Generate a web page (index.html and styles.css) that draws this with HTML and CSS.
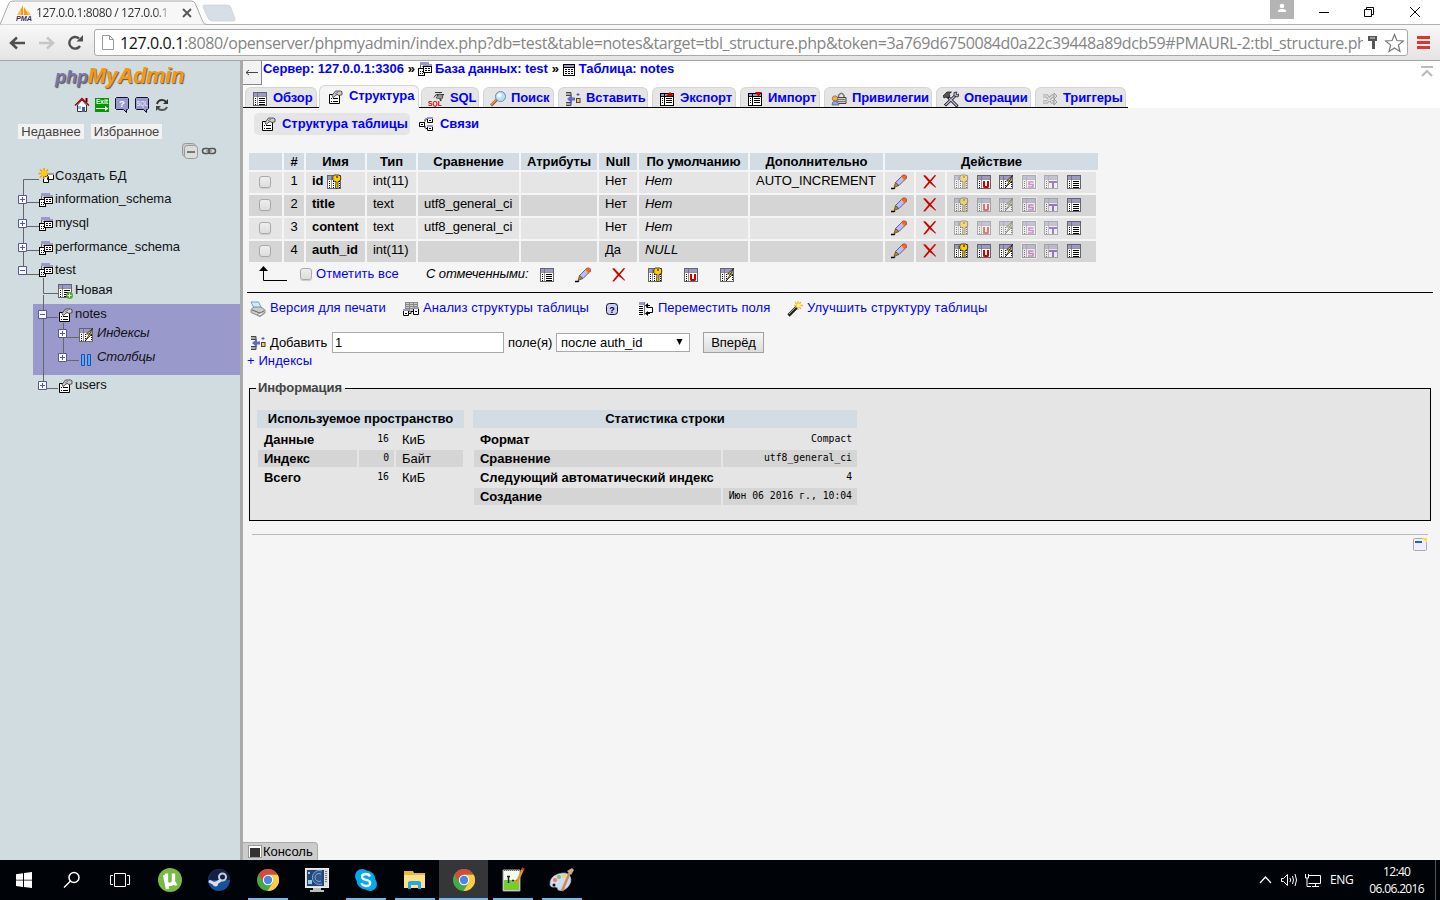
FILE: index.html
```html
<!DOCTYPE html>
<html lang="ru">
<head>
<meta charset="utf-8">
<title>127.0.0.1:8080 / 127.0.0.1</title>
<link rel="stylesheet" href="styles.css">
</head>
<body>
<svg class="defs" width="0" height="0">
  <defs>
    <g id="frame"><rect x="1.5" y="1.5" width="13" height="13" fill="#fff" stroke="#666"/><rect x="2" y="2" width="12" height="3" fill="#99c"/><path d="M2 5.5h12M5.5 2v12" stroke="#666" fill="none" stroke-opacity=".7"/><path d="M3.5 7v7" stroke="#000" stroke-dasharray="1 1"/></g>
    <g id="minidb"><rect x="3" y="1" width="9" height="3" fill="#99c"/><path d="M3.5 4v4M5 5.500h1M5 7.500h1" stroke="#666" fill="none"/><rect x="1.500" y="7.500" width="6" height="7" fill="#fff" stroke="#000"/><path d="M3 10.500h3M3 12.500h3" stroke="#000" stroke-dasharray="1 1"/><rect x="6.500" y="5.500" width="8" height="6" fill="#fff" stroke="#000"/><rect x="6" y="3" width="9" height="2" fill="#99c"/><path d="M8 7.500h2m1 0h2M8 9.500h2m1 0h2" stroke="#000"/></g>
  </defs>
  <symbol id="i-browse" viewBox="0 0 16 16"><use href="#frame"/><path d="M7 7.500h6M7 9.500h6M7 11.500h6M7 13.500h6" stroke="#000"/></symbol>
  <symbol id="i-key" viewBox="0 0 16 16"><use href="#frame"/><path d="M7.500 7v7M13.500 7v7" stroke="#000" stroke-dasharray="1 1"/><path d="M8.500 1h4.500l1.700 1.700v2.600L13 7.500h-1v6l-1 1.200-1.500-1 .5-6.200H8.500L6.800 5.500V2.700z" fill="#fc0" stroke="#000" stroke-width=".7"/><rect x="10" y="2.500" width="2" height="1" fill="#000"/><path d="M11.500 8v5" stroke="#a70" stroke-width=".7"/></symbol>
  <symbol id="i-uniq" viewBox="0 0 16 16"><use href="#frame"/><path d="M8 7v5.500q0 .5.500.5h3q.5 0 .5-.5V7" stroke="#c00" stroke-width="2" fill="none"/></symbol>
  <symbol id="i-index" viewBox="0 0 16 16"><use href="#frame"/><path d="M7.500 7v7M13.500 8v6" stroke="#000" stroke-dasharray="1 1"/><path d="M14.500 1.500l-6 5.500h3l-4 6.500L14 7h-2.500z" fill="#fd5" stroke="#000" stroke-width=".7"/></symbol>
  <symbol id="i-spatial" viewBox="0 0 16 16"><rect x="0" y="0" width="16" height="16" fill="#fff"/><use href="#frame"/><path d="M12.500 8h-4.500v2.500h4V13H7" stroke="#a3a" stroke-width="1.600" fill="none"/></symbol>
  <symbol id="i-full" viewBox="0 0 16 16"><use href="#frame"/><path d="M6 8h8M10 8v6" stroke="#40b" stroke-width="2" fill="none"/></symbol>
  <symbol id="i-pencil" viewBox="0 0 16 16"><path d="M0 14.500h3l1-1" stroke="#000" fill="none" stroke-width="1.300"/><path d="M3 13.500l1.500-5 3.500 3z" fill="#b80" stroke="#542" stroke-width=".7"/><path d="M4.500 8.500L10 3l3.500 3L8 11.500z" fill="#bbf" stroke="#446" stroke-width=".8"/><path d="M10 3l1.800-2h2.400L16 2.500v1.500L13.500 6z" fill="#e63" stroke="#a33" stroke-width=".7"/><path d="M10 3l3.500 3" stroke="#fc3"/></symbol>
  <symbol id="i-drop" viewBox="0 0 16 16"><path d="M1 1.500l2.300-.3L8 6.300 12.700 1l1.500.5L9 7.500l5 5.500-.5.700L7.800 9 3 14.500l-1.800-.3L6.500 7.800z" fill="#c00"/></symbol>
  <symbol id="i-prop" viewBox="0 0 16 16"><path d="M2.500 5.500h10v9h-10z" fill="#fff" stroke="#000"/><path d="M4 9.500h1M6 9.500h5M4 12.500h1M6 12.500h5" stroke="#000"/><path d="M5 6.500L8.500 2h5l1.500.8v3l-3 .7-2-1-4 3z" fill="#ccc" stroke="#333" stroke-width=".8"/><path d="M8 5l3-2" stroke="#777"/></symbol>
  <symbol id="i-db" viewBox="0 0 16 16"><use href="#minidb"/></symbol>
  <symbol id="i-newdb" viewBox="0 0 16 16"><path d="M5.500 8.500h5v6h-5zM9.500 6.500h6v5h-6z" stroke="#000" fill="#fff"/><path d="M9 6h7" stroke="#99c" stroke-width="2"/><path d="M6 0v11M.5 5.500h11M2 1.500l8 8M10 1.500l-8 8" stroke="#e9a000" stroke-width="1.500"/><circle cx="6" cy="5.500" r="3" fill="#fc0"/></symbol>
  <symbol id="i-table" viewBox="0 0 16 16"><rect x="2.500" y="3.500" width="11" height="11" fill="#fff" stroke="#000"/><path d="M3 4h10v2H3z" fill="#99c"/><path d="M3 6.500h10" stroke="#000"/><path d="M4 8.500h8M4 10.500h8M4 12.500h8" stroke="#000" stroke-dasharray="2 1"/></symbol>
  <symbol id="i-newtbl" viewBox="0 0 16 16"><use href="#i-browse"/><circle cx="12.500" cy="12.500" r="3.500" fill="#5a3"/><path d="M12.500 10.500v4M10.500 12.500h4" stroke="#fff"/></symbol>
  <symbol id="i-cols" viewBox="0 0 16 16"><path d="M3.500 3.500h3v11h-3zM9.500 3.500h3v11h-3z" fill="#5ae" stroke="#15b"/></symbol>
  <symbol id="i-sql" viewBox="0 0 20 16"><path d="M7 1.500h7M9 3.500h7M6 6.500l2-3 3 2M15 3l-1 4" stroke="#333" fill="none"/><path d="M8 7l3-4 4 1-1 4z" fill="#999" stroke="#333" stroke-width=".7"/><path d="M12 8l1 2" stroke="#333" stroke-width="1.500"/><text x="0" y="15" font-family="Liberation Sans" font-weight="bold" font-size="7" fill="#d00" textLength="14" lengthAdjust="spacingAndGlyphs">SQL</text></symbol>
  <symbol id="i-search" viewBox="0 0 16 16"><path d="M1 14.500L7 8.500" stroke="#954" stroke-width="3"/><path d="M1 14L7 8" stroke="#e94" stroke-width="1.500"/><circle cx="10.500" cy="5.500" r="5" fill="#bdf" stroke="#68b"/><circle cx="9.500" cy="4.500" r="2.300" fill="#eff"/></symbol>
  <symbol id="i-insert" viewBox="0 0 16 16"><path d="M1 1.500h5v3H1M1 11.500h5v3H1" fill="#aaa" stroke="#444"/><path d="M2 8l5-4.500v3h3v3H7v3z" fill="#66c"/><path d="M11.500 3.500h3M13 2v3" stroke="#55b" fill="none"/><rect x="11.500" y="7.500" width="3.500" height="4" fill="#fc3" stroke="#444"/></symbol>
  <symbol id="i-export" viewBox="0 0 16 16"><rect x="1.500" y="2.500" width="13" height="12" fill="#fff" stroke="#000"/><path d="M2 4h12" stroke="#99c" stroke-width="2"/><path d="M1 5.500h14M5.500 3v12" stroke="#000"/><path d="M7 7.500h6M7 9.500h6M7 11.500h6M3 7.500h1m-1 2h1m-1 2h1" stroke="#000"/><path d="M7 5l4-4 4 4z" fill="#c00"/></symbol>
  <symbol id="i-import" viewBox="0 0 16 16"><rect x="1.500" y="2.500" width="13" height="12" fill="#fff" stroke="#000"/><path d="M2 4h12" stroke="#99c" stroke-width="2"/><path d="M1 5.500h14M5.500 3v12" stroke="#000"/><path d="M7 7.500h6M7 9.500h6M7 11.500h6M3 7.500h1m-1 2h1m-1 2h1" stroke="#000"/><path d="M8 1h7l-3.500 4.500z" fill="#c00"/></symbol>
  <symbol id="i-priv" viewBox="0 0 16 16"><path d="M7.500 6V4.500q3-4.500 5.500 0v3" stroke="#777" fill="none" stroke-width="1.500"/><path d="M6 6.500h9v6H6z" fill="#ccc" stroke="#444"/><path d="M7 8.500h7M7 10.500h7" stroke="#777"/><circle cx="4" cy="7.500" r="2.700" fill="#fa3" stroke="#843" stroke-width=".6"/><path d="M1 14q0-4 3-4t4 4z" fill="#8ae" stroke="#446" stroke-width=".6"/></symbol>
  <symbol id="i-ops" viewBox="0 0 16 16"><path d="M5 6l9.500 9.500M2 14.500L12 5" stroke="#111" stroke-width="3"/><path d="M2.500 14L12 5M6 7l8 8" stroke="#bbd" stroke-width="1.400"/><path d="M0 5l4-4h4.500L6 3l1 2-3 2-1-1-2 1z" fill="#555" stroke="#111" stroke-width=".7"/><path d="M11 1.500V5l4 1 1-3-2 1-1-1 1-2z" fill="#bbd" stroke="#222" stroke-width=".8"/></symbol>
  <symbol id="i-trig" viewBox="0 0 16 16"><path d="M1 5h4l5 6h3M1 11h4l5-6h3" stroke="#999" stroke-width="3" fill="none"/><path d="M1 5h4l5 6h3M1 11h4l5-6h3" stroke="#ddd" stroke-width="1.400" fill="none"/><path d="M12 2l3 3-3 3zM12 8l3 3-3 3z" fill="#ddd" stroke="#888" stroke-width=".7"/></symbol>
  <symbol id="i-rel" viewBox="0 0 16 16"><path d="M5 6.500h2V3h3M7 10v2.500h3" stroke="#000" fill="none" stroke-dasharray="2 1"/><path d="M1.500 6.500h5v4h-5zM9.500 2.500h5v4h-5zM9.500 10.500h5v4h-5z" fill="#fff" stroke="#000"/><path d="M9 2h6M9 10h6" stroke="#99c" stroke-width="2"/><path d="M3 8.500h2M11 4.500h2M11 12.500h2" stroke="#000"/></symbol>
  <symbol id="i-home" viewBox="0 0 16 16"><path d="M3.500 8v6.500h9V8L8 3z" fill="#fff" stroke="#333"/><path d="M1 8.500l7-7 7 7" stroke="#a00" stroke-width="1.500" fill="none"/><path d="M12.500 1v4" stroke="#600" stroke-width="2"/><rect x="8" y="10" width="3" height="5" fill="#559"/><rect x="4" y="9" width="3" height="3" fill="#8be"/></symbol>
  <symbol id="i-exit" viewBox="0 0 16 16"><rect x="1" y="1" width="14" height="14" fill="#090"/><text x="2" y="7" font-family="Liberation Sans" font-weight="bold" font-size="6.500" fill="#fff" textLength="12" lengthAdjust="spacingAndGlyphs">Exit</text><path d="M2 11.500h9" stroke="#fff"/><path d="M11 9l3.500 2.500L11 14z" fill="#fff"/></symbol>
  <symbol id="i-help" viewBox="0 0 16 16"><path d="M2.500 .5h11l1 1v10l-1 1h-1v3l-3-3h-7l-1-1v-10z" fill="#99c" stroke="#113"/><text x="5" y="10" font-family="Liberation Sans" font-weight="bold" font-size="9.500" fill="#fff">?</text></symbol>
  <symbol id="i-sqlhelp" viewBox="0 0 16 16"><path d="M2.500 .5h11l1 1v10l-1 1h-1v3l-3-3h-7l-1-1v-10z" fill="#99c" stroke="#113"/><text x="2.500" y="9" font-family="Liberation Sans" font-size="7.500" fill="#fff" textLength="11" lengthAdjust="spacingAndGlyphs">SQL</text></symbol>
  <symbol id="i-reload" viewBox="0 0 16 16"><path d="M3 7q1-4 5-4 3 0 4 2" stroke="#333" stroke-width="2" fill="none"/><path d="M14 2v5H9z" fill="#333"/><path d="M13 10q-1 3-5 3-3 0-4-2" stroke="#555" stroke-width="2" fill="none"/><path d="M2 14V9h5z" fill="#444"/></symbol>
  <symbol id="i-link" viewBox="0 0 16 16"><rect x="1.500" y="5.500" width="7" height="5" rx="2.500" fill="none" stroke="#555" stroke-width="1.500"/><rect x="7.500" y="5.500" width="7" height="5" rx="2.500" fill="none" stroke="#555" stroke-width="1.500"/><path d="M5 8h6" stroke="#777"/></symbol>
  <symbol id="i-print" viewBox="0 0 16 16"><path d="M1 1h7.500l3 6H4z" fill="#cef" stroke="#58c" stroke-width=".8"/><path d="M1 8.500l3-2.500h7l4 3v3l-5 3.500-9-4z" fill="#ccc" stroke="#777" stroke-width=".8"/><path d="M2 9l8 3 4-2" stroke="#666" fill="none"/><path d="M7 13.500l5-2 1.500 1.500-4.500 2z" fill="#fff" stroke="#777" stroke-width=".7"/></symbol>
  <symbol id="i-analyse" viewBox="0 0 16 16"><rect x="2.500" y="1.500" width="12" height="9" fill="#ccc" stroke="#888"/><path d="M3 3.500h11M3 5.500h11M3 7.500h11M6.500 2v8M10.500 2v8" stroke="#888"/><path d="M.5 9.500h5v5h-5zM10.500 7.500h5v6h-5z" fill="#fff" stroke="#000"/><path d="M0 9h6M10 7h6" stroke="#99c" stroke-width="2"/><path d="M2 12.500h2M12 10.500h2M6 12.500h2v-2h2" stroke="#000" fill="none"/></symbol>
  <symbol id="i-q" viewBox="0 0 16 16"><rect x="2.500" y="2.500" width="11" height="11" rx="3" fill="#ccf" stroke="#112"/><text x="5.300" y="11.500" font-family="Liberation Sans" font-weight="bold" font-size="9" fill="#000">?</text></symbol>
  <symbol id="i-move" viewBox="0 0 16 16"><rect x="1" y="1" width="5" height="3" fill="#99c"/><path d="M1 5.500h4M1 7.500h4M1 9.500h4M1 11.500h4M1 13.500h4" stroke="#000"/><path d="M6.500 1v13" stroke="#777"/><path d="M9 4.500h3M9 12.500h3" stroke="#000"/><path d="M8.500 6.500h6v5h-6" stroke="#000" fill="#fff"/><path d="M10 2v5L7 4.500zM10 10v5l-3-2.500z"/></symbol>
  <symbol id="i-wand" viewBox="0 0 16 16"><path d="M11 0v9M7 4.500h9M8 1l6 7M14 1L8 8" stroke="#eb3" stroke-width="1.300"/><path d="M1.500 14.500l8-8" stroke="#222" stroke-width="3.200"/><path d="M2 13l7-7" stroke="#999" stroke-width="1"/><circle cx="11.500" cy="4.500" r="2" fill="#fe8"/></symbol>
  <symbol id="i-chrome" viewBox="0 0 22 22"><circle cx="11" cy="11" r="11" fill="#4a4"/><path d="M1.500 5.500A11 11 0 0 1 20.500 5.500H11L6.500 13.500z" fill="#d54a3c"/><path d="M20.700 5.800A11 11 0 0 1 10.500 22L15.800 13.500 11 5.800z" fill="#fc4"/><circle cx="11" cy="11" r="5.200" fill="#fff"/><circle cx="11" cy="11" r="4.200" fill="#4a86e8"/></symbol>
</svg>

<header class="browser">
  <div class="tabstrip">
    <svg class="tabshape" width="240" height="25"><path d="M0 24.500L9 3q1-2 4-2H191q3 0 4 2l8 19q1 2.500 4 2.500" fill="#f7f7f7" stroke="#aaa"/><path d="M204 5h23q3 0 4 3l4 11q0 2-2 2h-21q-3 0-4-3l-5-11q0-2 1-2z" fill="#d8dee6" stroke="#c4cad2" stroke-width=".6"/></svg>
    <div class="tabtitle">
      <svg width="16" height="16"><path d="M7 0v10H2zM8 2l5 8H8z" fill="#f90"/><path d="M1 10l4-7v7zM11 5l4 5h-3z" fill="#fb6"/><text x="0" y="15.500" font-family="Liberation Sans" font-weight="bold" font-style="italic" font-size="7" fill="#336" textLength="16" lengthAdjust="spacingAndGlyphs">PMA</text></svg>
      <span class="title">127.0.0.1:8080 / 127.0.0.1</span>
      <svg width="10" height="10"><path d="M1 1l8 8M9 1L1 9" stroke="#555" stroke-width="1.800"/></svg>
    </div>
    <div class="winbtns">
      <svg width="24" height="19"><rect width="24" height="19" fill="#b4b4b4"/><circle cx="12" cy="6" r="2.300" fill="#fff"/><path d="M8 12v-1q0-2 4-2t4 2v1z" fill="#fff"/></svg>
      <svg width="10" height="12"><path d="M0 6.500h10" stroke="#000"/></svg>
      <svg width="11" height="12"><path d="M.5 3.500h7v7h-7zM2.500 3.500v-2h7v7h-2" fill="none" stroke="#000"/></svg>
      <svg width="10" height="12"><path d="M0 1l10 10M10 1L0 11" stroke="#000"/></svg>
    </div>
  </div>
  <div class="toolbar">
    <svg width="80" height="34"><path d="M25 17H12M17 11.500L11 17l6 5.500" stroke="#505050" stroke-width="2.500" fill="none"/><path d="M39 17h13M47 11.500l6 5.500-6 5.500" stroke="#c6c6c6" stroke-width="2.500" fill="none"/><path d="M80 20A5.800 5.800 0 1 1 79 12.500" stroke="#505050" stroke-width="2.400" fill="none"/><path d="M83 9v6.500h-6.500z" fill="#505050"/></svg>
    <div class="address">
      <svg width="14" height="17"><path d="M1.500 1.500h7l4 4v10h-11zM8.500 1.500v4h4" fill="#fff" stroke="#999"/></svg>
      <div class="url"><b>127.0.0.1</b><span>:8080/openserver/phpmyadmin/index.php?db=test&amp;table=notes&amp;target=tbl_structure.php&amp;token=3a769d6750084d0a22c39448a89dcb59#PMAURL-2:tbl_structure.ph</span></div>
      <svg width="38" height="22"><path d="M1 4h9v5H8v8H5V9H1z" fill="#555"/><path d="M3 6h5" stroke="#ddd"/><path d="M27.500 2.500l2.400 6 6.400.4-4.900 4.200 1.600 6.400-5.500-3.500-5.500 3.500 1.600-6.400-4.900-4.200 6.400-.4z" fill="#fff" stroke="#777" stroke-width="1.200"/></svg>
    </div>
    <svg width="14" height="15"><path d="M0 2.500h13M0 7.500h13M0 12.500h13" stroke="#e0342c" stroke-width="3"/></svg>
  </div>
</header>

<div class="page">
  <aside class="sidebar">
    <div class="logo"><i>php</i><em>MyAdmin</em></div>
    <div class="navicons"><svg class="ic"><use href="#i-home"/></svg><svg class="ic"><use href="#i-exit"/></svg><svg class="ic"><use href="#i-help"/></svg><svg class="ic"><use href="#i-sqlhelp"/></svg><svg class="ic"><use href="#i-reload"/></svg></div>
    <div class="quick"><span class="q1">Недавнее</span><span class="q2">Избранное</span></div>
    <div class="treectl"><svg width="17" height="17"><rect x=".5" y=".5" width="13" height="13" rx="3" fill="#ccc" stroke="#999"/><rect x="2.500" y="2.500" width="13" height="13" rx="3" fill="#ddd" stroke="#999"/><path d="M5 9h8" stroke="#555" stroke-width="1.500"/></svg><svg class="ic"><use href="#i-link"/></svg></div>
    <div class="tree">
      <svg class="lines" width="100" height="234">
        <g stroke="#666" fill="none"><path d="M39 16.500H23.500V107M23 39.500h16M23 63.500h16M23 87.500h16M23 111.500h16M43.500 115v15.500H58M43.500 132v91M43 154.500h15M63.500 160v35M63 174.500h16M63 197.500h16M43 225.500h15"/></g>
        <g fill="#fff" stroke="#55a"><path d="M18.500 32.500h8v8h-8zM18.500 56.500h8v8h-8zM18.500 80.500h8v8h-8zM18.500 103.500h8v8h-8zM38.500 147.500h8v8h-8zM58.500 166.500h8v8h-8zM58.500 190.500h8v8h-8zM38.500 218.500h8v8h-8z"/><path d="M20 36.500h5M22.500 34v5M20 60.500h5M22.500 58v5M20 84.500h5M22.500 82v5M20 107.500h5M40 151.500h5M60 170.500h5M62.500 168v5M60 194.500h5M62.500 192v5M40 222.500h5M42.500 220v5"/></g>
      </svg>
      <div class="row r24 low"><svg class="ic"><use href="#i-newdb"/></svg><span class="t1">Создать БД</span></div>
      <div class="row r24"><svg class="ic"><use href="#i-db"/></svg><span>information_schema</span></div>
      <div class="row r24"><svg class="ic"><use href="#i-db"/></svg><span>mysql</span></div>
      <div class="row r23"><svg class="ic"><use href="#i-db"/></svg><span>performance_schema</span></div>
      <div class="row r22 low"><svg class="ic"><use href="#i-db"/></svg><span>test</span></div>
      <div class="row lvl2"><svg class="ic"><use href="#i-newtbl"/></svg><span>Новая</span></div>
      <div class="group">
        <div class="row lvl2"><svg class="ic"><use href="#i-prop"/></svg><span>notes</span></div>
        <div class="row lvl3 r18"><svg class="ic"><use href="#i-index"/></svg><i>Индексы</i></div>
        <div class="row lvl3 r30"><svg class="ic"><use href="#i-cols"/></svg><i>Столбцы</i></div>
      </div>
      <div class="row lvl2"><svg class="ic"><use href="#i-prop"/></svg><span>users</span></div>
    </div>
  </aside>

  <main class="content">
    <div class="menubar">
      <div class="crumbs">
        <div class="goback"><svg width="14" height="9"><path d="M1 4.500h12M4 2L1 4.500 4 7" stroke="#444" fill="none"/></svg></div>
        <div class="crumbline"><a>Сервер: 127.0.0.1:3306</a><b class="sep">»</b><svg class="ic"><use href="#i-db"/></svg><a>База данных: test</a><b class="sep">»</b><svg class="ic"><use href="#i-table"/></svg><a>Таблица: notes</a></div>
        <svg class="totop" width="12" height="12"><path d="M0 1h12" stroke="#bbb" stroke-width="2"/><path d="M1 10l5-5 5 5" stroke="#bbb" stroke-width="2.200" fill="none"/></svg>
      </div>
      <nav class="tabs">
        <a class="tab"><svg class="ic"><use href="#i-browse"/></svg><span>Обзор</span></a>
        <a class="tab active"><svg class="ic"><use href="#i-prop"/></svg><span>Структура</span></a>
        <a class="tab"><svg class="ic wide"><use href="#i-sql"/></svg><span>SQL</span></a>
        <a class="tab"><svg class="ic"><use href="#i-search"/></svg><span>Поиск</span></a>
        <a class="tab"><svg class="ic"><use href="#i-insert"/></svg><span>Вставить</span></a>
        <a class="tab"><svg class="ic"><use href="#i-export"/></svg><span>Экспорт</span></a>
        <a class="tab"><svg class="ic"><use href="#i-import"/></svg><span>Импорт</span></a>
        <a class="tab"><svg class="ic"><use href="#i-priv"/></svg><span>Привилегии</span></a>
        <a class="tab"><svg class="ic"><use href="#i-ops"/></svg><span>Операции</span></a>
        <a class="tab"><svg class="ic"><use href="#i-trig"/></svg><span>Триггеры</span></a>
      </nav>
    </div>
    <div class="subtabs"><a class="sub on"><svg class="ic"><use href="#i-prop"/></svg><span>Структура таблицы</span></a><a class="sub"><svg class="ic"><use href="#i-rel"/></svg><span>Связи</span></a></div>

    <div class="grid">
      <b></b><b>#</b><b>Имя</b><b>Тип</b><b>Сравнение</b><b>Атрибуты</b><b>Null</b><b>По умолчанию</b><b>Дополнительно</b><b class="act">Действие</b>

      <div class="ck"><i class="box"></i></div><div class="n">1</div><div class="name">id <svg class="ic"><use href="#i-key"/></svg></div><div>int(11)</div><div></div><div></div><div>Нет</div><div class="it">Нет</div><div>AUTO_INCREMENT</div><div class="one"><svg class="ic"><use href="#i-pencil"/></svg></div><div class="one"><svg class="ic"><use href="#i-drop"/></svg></div>
      <div class="six"><svg class="ic off"><use href="#i-key"/></svg><svg class="ic"><use href="#i-uniq"/></svg><svg class="ic"><use href="#i-index"/></svg><svg class="ic off"><use href="#i-spatial"/></svg><svg class="ic off"><use href="#i-full"/></svg><svg class="ic"><use href="#i-browse"/></svg></div>

      <div class="ck d"><i class="box"></i></div><div class="n d">2</div><div class="name d">title</div><div class="d">text</div><div class="d">utf8_general_ci</div><div class="d"></div><div class="d">Нет</div><div class="it d">Нет</div><div class="d"></div><div class="one d"><svg class="ic"><use href="#i-pencil"/></svg></div><div class="one d"><svg class="ic"><use href="#i-drop"/></svg></div>
      <div class="six d"><svg class="ic off"><use href="#i-key"/></svg><svg class="ic off"><use href="#i-uniq"/></svg><svg class="ic off"><use href="#i-index"/></svg><svg class="ic off"><use href="#i-spatial"/></svg><svg class="ic off"><use href="#i-full"/></svg><svg class="ic"><use href="#i-browse"/></svg></div>

      <div class="ck"><i class="box"></i></div><div class="n">3</div><div class="name">content</div><div>text</div><div>utf8_general_ci</div><div></div><div>Нет</div><div class="it">Нет</div><div></div><div class="one"><svg class="ic"><use href="#i-pencil"/></svg></div><div class="one"><svg class="ic"><use href="#i-drop"/></svg></div>
      <div class="six"><svg class="ic off"><use href="#i-key"/></svg><svg class="ic off"><use href="#i-uniq"/></svg><svg class="ic off"><use href="#i-index"/></svg><svg class="ic off"><use href="#i-spatial"/></svg><svg class="ic off"><use href="#i-full"/></svg><svg class="ic"><use href="#i-browse"/></svg></div>

      <div class="ck d"><i class="box"></i></div><div class="n d">4</div><div class="name d">auth_id</div><div class="d">int(11)</div><div class="d"></div><div class="d"></div><div class="d">Да</div><div class="it d">NULL</div><div class="d"></div><div class="one d"><svg class="ic"><use href="#i-pencil"/></svg></div><div class="one d"><svg class="ic"><use href="#i-drop"/></svg></div>
      <div class="six d"><svg class="ic"><use href="#i-key"/></svg><svg class="ic"><use href="#i-uniq"/></svg><svg class="ic"><use href="#i-index"/></svg><svg class="ic off"><use href="#i-spatial"/></svg><svg class="ic off"><use href="#i-full"/></svg><svg class="ic"><use href="#i-browse"/></svg></div>
    </div>

    <div class="bulk">
      <svg width="29" height="16"><path d="M4.500 4v10.500H28" stroke="#000" fill="none"/><path d="M4.500 0L9 5H0z"/></svg>
      <i class="box"></i><a class="all">Отметить все</a><i class="with">С отмеченными:</i>
      <div class="bulkicons"><svg class="ic"><use href="#i-browse"/></svg><svg class="ic"><use href="#i-pencil"/></svg><svg class="ic"><use href="#i-drop"/></svg><svg class="ic"><use href="#i-key"/></svg><svg class="ic"><use href="#i-uniq"/></svg><svg class="ic"><use href="#i-index"/></svg></div>
    </div>

    <div class="links">
      <svg class="ic"><use href="#i-print"/></svg><a class="l1">Версия для печати</a>
      <svg class="ic"><use href="#i-analyse"/></svg><a class="l2">Анализ структуры таблицы</a>
      <svg class="ic help"><use href="#i-q"/></svg>
      <svg class="ic"><use href="#i-move"/></svg><a class="l3">Переместить поля</a>
      <svg class="ic"><use href="#i-wand"/></svg><a class="l4">Улучшить структуру таблицы</a>
    </div>
    <div class="addrow"><svg class="ic"><use href="#i-insert"/></svg><span class="add">Добавить</span><span class="input">1</span><span class="fields">поле(я)</span><span class="select"><span>после auth_id</span><svg width="8" height="7"><path d="M.5 0h6L3.500 6z"/></svg></span><span class="btn">Вперёд</span></div>
    <a class="idx">+ Индексы</a>

    <section class="info">
      <h2>Информация</h2>
      <div class="space">
        <b class="hd">Используемое пространство</b>
        <b>Данные</b><tt>16</tt><span>КиБ</span>
        <b class="d">Индекс</b><tt class="d">0</tt><span class="d">Байт</span>
        <b>Всего</b><tt>16</tt><span>КиБ</span>
      </div>
      <div class="stats">
        <b class="hd">Статистика строки</b>
        <b>Формат</b><tt>Compact</tt>
        <b class="d">Сравнение</b><tt class="d">utf8_general_ci</tt>
        <b>Следующий автоматический индекс</b><tt>4</tt>
        <b class="d">Создание</b><tt class="d">Июн 06 2016 г., 10:04</tt>
      </div>
    </section>
    <div class="foot"><svg width="16" height="16"><rect x="1.500" y="2.500" width="13" height="12" rx="1" fill="#eef" stroke="#aaa"/><path d="M3 6h7" stroke="#26a" stroke-width="2"/><path d="M10 2h5v5z" fill="#fd4"/></svg></div>
    <div class="console"><svg width="14" height="14"><rect x=".5" y=".5" width="13" height="12" fill="#fff" stroke="#999"/><rect x="2" y="3" width="10" height="9" fill="#333"/></svg><span>Консоль</span></div>
  </main>
</div>

<footer class="taskbar">
  <div class="sys"><svg width="16" height="16"><path d="M0 2.200l7-1v6.500H0zM8 1l8-1v7.700H8zM0 8.600h7v6.400l-7-1zM8 8.600h8V16l-8-1z" fill="#fff"/></svg></div>
  <div class="sys"><svg width="18" height="18"><circle cx="11" cy="6.500" r="5" fill="none" stroke="#fff" stroke-width="1.500"/><path d="M7.500 10L1 16.500" stroke="#fff" stroke-width="1.500"/></svg></div>
  <div class="sys"><svg width="20" height="16"><path d="M4.500 1.500h11v13h-11zM3 3.500H.500v9H3M17 3.500h2.500v9H17" fill="none" stroke="#fff"/></svg></div>
  <div class="apps">
    <div class="app"><svg width="24" height="24"><circle cx="12" cy="12" r="12" fill="#7b4"/><path d="M8.500 5.500v8q0 3 3 3 4 0 4-4V5.500M15.500 12q0 5 3 3.500M6.500 7l3 14" fill="none" stroke="#fff" stroke-width="3.300"/></svg></div>
    <div class="app"><svg width="22" height="22"><circle cx="11" cy="11" r="11" fill="#14539a"/><path d="M2 5A11 11 0 0 1 22 11H0z" fill="#132043"/><circle cx="14.500" cy="8" r="3.500" fill="none" stroke="#ccd" stroke-width="2"/><path d="M1 12l6 3 6-4" stroke="#dde" stroke-width="3" fill="none"/><circle cx="7.500" cy="15" r="2.500" fill="#ddd"/></svg></div>
    <div class="app open"><svg width="22" height="22"><use href="#i-chrome"/></svg></div>
    <div class="app"><svg width="24" height="24"><rect x=".5" y=".5" width="23" height="19" fill="#ddd" stroke="#eee"/><rect x="2" y="2" width="17" height="16" fill="#247"/><path d="M17 3a7 7 0 1 0 0 13M16 6a4 4 0 1 0 0 7" fill="#358" stroke="#7ad"/><path d="M3 4h2v2H3zM3 12h4v4H3z" fill="#9cd"/><path d="M21 3v12" stroke="#777" stroke-dasharray="1 1" stroke-width="2"/><path d="M8 20h8v2h3v2H5v-2h3z" fill="#bbb"/></svg></div>
    <div class="app open"><svg width="22" height="22"><circle cx="7" cy="7" r="7" fill="#0ae"/><circle cx="15" cy="15" r="7" fill="#0ae"/><circle cx="11" cy="11" r="9.500" fill="#0ae"/><path d="M15 7.500q-1-2.500-4-2.500-4 0-4 3 0 2 4 2.800 4.200.8 4.200 3.200 0 3-4.200 3-3.500 0-4.500-3" fill="none" stroke="#fff" stroke-width="2.300"/></svg></div>
    <div class="app open"><svg width="22" height="20"><path d="M0 1h9l1 2h11v15H0z" fill="#e9b93c"/><path d="M0 5h21v13H0z" fill="#fde28c"/><path d="M4 19v-7l2-1h9l2 1v7h-3v-4H7v4z" fill="#29a8e0"/></svg></div>
    <div class="app open cur"><svg width="22" height="22"><use href="#i-chrome"/></svg></div>
    <div class="app open"><svg width="24" height="24"><path d="M2 2h17v21H2z" fill="#f4f8ee" stroke="#999"/><path d="M3 12h15v10H3z" fill="#7c3"/><path d="M3 2h16" stroke="#666" stroke-width="2" stroke-dasharray="1 1"/><path d="M7.500 8v7M6 8.500h3M11 12.500h2M15 12.500h2" stroke="#222" stroke-width="1.500"/><path d="M22 1l-7 15" stroke="#d92" stroke-width="2.500"/><path d="M22.500 0l-1 2" stroke="#b33" stroke-width="3"/></svg></div>
    <div class="app open"><svg width="24" height="24"><path d="M0 17Q-1 9 8 6q9-3 12 2 3 6-3 12-4 4-9 2 0-3-3-3-4 1-5-2z" fill="#cde" stroke="#9ab" stroke-width=".6"/><circle cx="5" cy="12" r="2" fill="#e76"/><circle cx="9" cy="9" r="2" fill="#8b5"/><circle cx="14" cy="8" r="2" fill="#fc6"/><circle cx="4" cy="17" r="1.500" fill="#111"/><path d="M20 4l-8 19" stroke="#c85" stroke-width="2.500"/><path d="M17 3l5-3 2 2-3 5z" fill="#ca8"/></svg></div>
  </div>
  <div class="tray">
    <svg width="62" height="18"><path d="M1 12l5.500-6 5.500 6" fill="none" stroke="#fff" stroke-width="1.300"/><path d="M22.500 7.500h2l4-4v11l-4-4h-2z" fill="none" stroke="#fff"/><path d="M31 7q1 2 0 4M33.500 5q2 4 0 8M36 3q3 6 0 12" fill="none" stroke="#fff"/><path d="M49.500 4.500h12v8h-12M53 15.500h7M56.500 13v2M46.500 3v4h3V3M48 7v8.500h4" fill="none" stroke="#fff"/></svg>
    <span class="lang">ENG</span>
    <div class="clock"><span>12:40</span><span>06.06.2016</span></div>
  </div>
</footer>
</body>
</html>
```

FILE: styles.css
```css
* { box-sizing: border-box; }
body { margin: 0; width: 1440px; height: 900px; overflow: hidden; font: 13px/16px "Liberation Sans", Arial, sans-serif; letter-spacing: -.04px; color: #000; background: #f5f5f5; }
svg { display: block; flex: none; overflow: visible; }
.defs { display: none; }
.ic { width: 16px; height: 16px; letter-spacing: 0; }
.ic.wide { width: 20px; }
.ic.off { opacity: .45; }
span, a, b { white-space: nowrap; }
a { color: #0000ff; }

/* browser window */
.browser { height: 61px; border-bottom: 1px solid #a5a5a5; background: #fff; font-family: "Open Sans", "Noto Sans", sans-serif; }
.tabstrip { position: relative; height: 25px; display: flex; justify-content: space-between; border-bottom: 1px solid #b0b0b0; }
.tabshape { position: absolute; left: 0; top: 0; }
.tabtitle { position: relative; display: flex; align-items: center; gap: 4px; padding-left: 16px; height: 26px; }
.title { width: 138px; overflow: hidden; font-size: 12px; letter-spacing: -.4px; color: #333; -webkit-mask-image: linear-gradient(90deg, #000 118px, transparent 138px); }
.tabtitle svg:last-child { margin-left: 4px; }
.winbtns { display: flex; align-items: center; padding-right: 20px; height: 24px; }
.winbtns svg:first-child { align-self: flex-start; margin-right: 25px; }
.winbtns svg:nth-child(2) { margin-right: 35px; }
.winbtns svg:nth-child(3) { margin-right: 35px; }
.toolbar { height: 35px; display: flex; align-items: center; padding-right: 9px; background: linear-gradient(#f8f8f8, #e4e4e4); }
.toolbar > svg:last-child { margin-left: 9px; }
.address { flex: none; width: 1314px; margin-left: 14px; height: 27px; display: flex; align-items: center; border: 1px solid #aaa; border-radius: 3px; background: #fff; padding: 0 2px 0 6px; }
.url { flex: none; width: 1243px; margin: 0 4px 0 5px; overflow: hidden; white-space: nowrap; font-size: 16px; line-height: 24px; letter-spacing: -.4px; color: #858585; }
.url b { font-weight: 400; color: #111; }

.page { display: flex; height: 799px; }

/* navigation panel */
.sidebar { width: 243px; border-right: 3px solid #aaa; background: #d0dce0; }
.logo { height: 33px; padding: 4px 0 0 55px; font: italic bold 18px/22px "Liberation Sans", sans-serif; white-space: nowrap; text-shadow: 1px 1px 1px #555; }
.logo i { color: #7777aa; }
.logo em { font-size: 21.5px; color: #f89810; }
.navicons { display: flex; gap: 4px; padding: 3px 0 0 74px; height: 30px; }
.quick { display: flex; gap: 7px; padding-left: 18px; height: 16px; color: #444; }
.quick span { height: 15px; line-height: 15px; text-align: center; background: #f2f2f2; }
.q1 { width: 66px; }
.q2 { width: 71px; }
.treectl { display: flex; gap: 2px; padding: 3px 0 0 182px; height: 23px; }
.tree { position: relative; color: #111; }
.lines { position: absolute; left: 0; top: 0; z-index: 1; }
.row { display: flex; align-items: center; height: 20px; padding-left: 38px; gap: 1px; }
.row .ic { position: relative; top: 1px; }
.r24 { height: 24px; }
.r23 { height: 23px; }
.r22 { height: 22px; }
.low { padding-top: 2px; }
.low .ic { top: 0; }
.t1 { letter-spacing: .12px; }
.r18 { height: 18px; }
.r30 { height: 30px; }
.lvl2 { padding-left: 57px; gap: 2px; }
.group { height: 71px; margin-top: 4px; margin-left: 33px; background: #9999cc; }
.group .lvl2 { padding-left: 24px; }
.group .lvl3 { padding-left: 45px; gap: 3px; }
.group .lvl3 .ic { top: 2px; }

/* server / database / table menu */
.content { position: relative; flex: 1; }
.menubar { height: 47px; background: #fff; }
.crumbs { display: flex; height: 24px; }
.goback { display: flex; align-items: center; justify-content: center; width: 19px; height: 24px; border: 1px solid #888; border-left: 0; border-top: 0; background: #f2f2f2; }
.crumbline { flex: 1; display: flex; height: 16px; font-weight: bold; letter-spacing: -.1px; padding-left: 1px; }
.sep { padding: 0 2px 0 4px; }
.crumbline .ic { margin-right: 2px; }
.totop { margin: 5px 7px 0 0; }
.tabs { display: grid; grid-template-columns: 72px 96px 58px 71px 90px 84px 80px 108px 95px 91px; gap: 4px; align-items: end; width: 885px; height: 23px; padding-left: 2px; background: linear-gradient(#000, #000) 0 100%/885px 1px no-repeat; font-weight: bold; letter-spacing: -.1px; }
.tab { display: flex; align-items: center; height: 20px; margin-bottom: 1px; padding-left: 6px; gap: 5px; border: 1px solid #d5d5d5; border-bottom: 0; border-radius: 6px 6px 0 0; background: #e5e5e5; }
.tab .ic { position: relative; top: 1px; }
.tab .wide { margin-right: -3px; }
.tab.active { height: 23px; margin: 0 -2px; padding: 0 0 2px 7px; gap: 6px; background: #f5f5f5; }
.subtabs { display: flex; gap: 2px; margin-top: 5px; padding-left: 11px; font-weight: bold; }
.sub { display: flex; align-items: center; gap: 6px; height: 22px; padding: 0 6px; border-radius: 5px; }
.on { width: 156px; padding-right: 0; background: #e5e5e5; }

/* columns table */
.grid { display: grid; grid-template-columns: 33px 20px 59px 49px 101px 76px 38px 109px 133px 29px 29px 149px; grid-auto-rows: 21px; grid-template-rows: 17px; gap: 2px; width: 849px; margin: 18px 0 0 6px; }
.grid > b { background: #d3dce3; text-align: center; line-height: 17px; }
.grid > .act { grid-column: span 3; margin-right: -2px; }
.grid > div { background: #e5e5e5; padding-left: 6px; line-height: 18px; white-space: nowrap; }
.grid > .d { background: #d5d5d5; }
.grid > .n { padding: 0; text-align: center; }
.grid .name { display: flex; gap: 3px; font-weight: bold; }
.name .ic { margin-top: 2px; }
.grid .it { font-style: italic; }
.grid .one { padding: 2px 0 0 6px; }
.grid .six { display: flex; justify-content: space-between; width: 149px; padding: 2px 14px 0 6px; }
.box { display: block; width: 12px; height: 12px; border: 1px solid #aaa; border-radius: 3px; background: linear-gradient(#eee, #ddd); box-shadow: 0 1px 1px #ccc; }
.grid > .ck { padding-left: 10px; padding-top: 4px; }
.bulk { display: flex; height: 31px; margin: 0 7px 0 4px; padding: 4px 0 0 12px; border-bottom: 1px solid #000; }
.bulk .box { margin: 2px 4px 0 12px; }
.all { width: 110px; letter-spacing: .08px; }
.with { width: 113px; letter-spacing: -.1px; }
.bulkicons { display: flex; gap: 20px; padding-top: 1px; }

.links { display: flex; margin: 7px 0 0 7px; height: 24px; }
.links .ic { margin-top: 1px; margin-right: 4px; }
.l1 { width: 133px; letter-spacing: .1px; }
.l2 { width: 181px; letter-spacing: .1px; }
.links .help { margin-right: 18px; }
.l3 { width: 129px; letter-spacing: .02px; }
.l4 { letter-spacing: .2px; }
.addrow { display: flex; align-items: center; height: 21px; margin: 8px 0 0 7px; }
.addrow > .ic { margin-right: 4px; }
.add { width: 62px; }
.input { width: 172px; height: 21px; border: 1px solid #a9a9a9; background: #fff; line-height: 20px; padding-left: 2px; }
.fields { width: 52px; padding-left: 4px; }
.select { display: flex; align-items: center; justify-content: space-between; width: 134px; height: 19px; padding: 0 5px 0 4px; border: 1px solid #a9a9a9; background: #fff; }
.btn { width: 61px; height: 21px; margin-left: 13px; border: 1px solid #a0a0a0; background: linear-gradient(#f6f6f6, #ddd); text-align: center; line-height: 20px; }
.idx { display: block; margin: -1px 0 0 4px; line-height: 18px; letter-spacing: .1px; }

.info { position: relative; display: flex; gap: 9px; align-items: flex-start; height: 133px; margin: 18px 9px 0 6px; padding: 21px 0 0 7px; border: 1px solid #000; background: #e5e5e5; }
.info h2 { position: absolute; left: 6px; top: -9px; margin: 0; padding: 0 3px 0 2px; font: bold 13px/16px "Liberation Sans", sans-serif; color: #444; background: linear-gradient(#f5f5f5 50%, #e5e5e5 50%); }
.space, .stats { display: grid; grid-template-rows: 19px; grid-auto-rows: 17px; gap: 2px; line-height: 18px; }
.space { grid-template-columns: 99px 35px 67px; width: 207px; padding: 0 1px; }
.stats { grid-template-columns: 247px 134px; width: 384px; padding-left: 1px; }
.space > *, .stats > * { padding-left: 6px; }
.info .hd { grid-column: 1 / -1; height: 18px; margin: 0 -1px; padding: 0; background: #d3dce3; text-align: center; }
.stats .hd { margin-right: 0; }
.info tt { padding: 0 5px 0 0; font: 9.75px/15px "DejaVu Sans Mono", monospace; letter-spacing: 0; text-align: right; white-space: nowrap; }
.info .d { background: #d5d5d5; }
.foot { display: flex; justify-content: flex-end; margin: 13px 12px 0 9px; padding-top: 1px; border-top: 1px solid #bbb; }
.console { position: absolute; left: 0; bottom: 0; display: flex; align-items: center; gap: 1px; width: 75px; height: 18px; padding-left: 5px; border: 1px solid #aaa; border-left: 0; border-bottom: 0; border-radius: 0 4px 0 0; background: #ccc; }

/* desktop taskbar */
.taskbar { display: flex; height: 40px; background: #000307; color: #fff; font-family: "Open Sans", "Noto Sans", sans-serif; }
.sys { width: 48px; display: flex; align-items: center; justify-content: center; }
.apps { display: flex; margin-left: 1px; }
.app { position: relative; width: 49px; display: flex; align-items: center; justify-content: center; }
.open::after { content: ""; position: absolute; left: 5px; right: 4px; bottom: 0; height: 2px; background: #76b9ed; }
.cur { background: #34363a; }
.cur::after { left: 0; right: 0; }
.tray { display: flex; flex: 1; align-items: center; justify-content: flex-end; margin-right: 4px; padding-right: 11px; border-right: 1px solid #555; font-size: 12px; letter-spacing: -.65px; }
.lang { margin: 0 16px 0 9px; letter-spacing: -.4px; }
.clock { display: flex; flex-direction: column; align-items: center; line-height: 17px; padding-bottom: 1px; }
```
